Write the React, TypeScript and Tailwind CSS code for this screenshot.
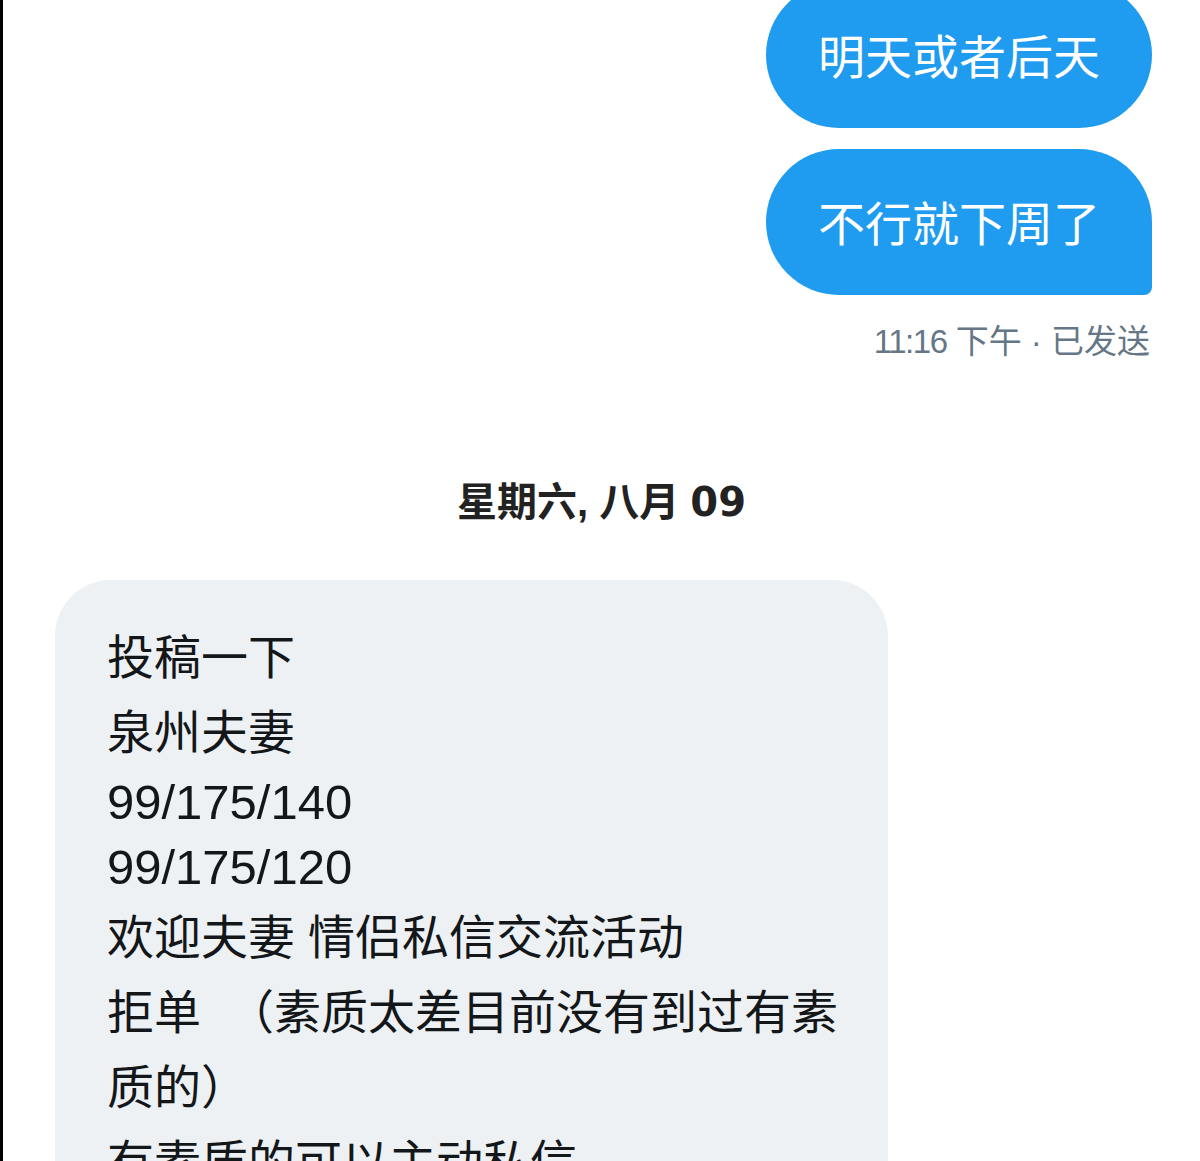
// App.tsx
const font = "font-['Liberation_Sans','Noto_Sans_CJK_SC',sans-serif]";

const lines: { text: string; num?: boolean }[] = [
  { text: "投稿一下" },
  { text: "泉州夫妻" },
  { text: "99/175/140", num: true },
  { text: "99/175/120", num: true },
  { text: "欢迎夫妻 情侣私信交流活动" },
  { text: "拒单\u00a0\u00a0（素质太差目前没有到过有素" },
  { text: "质的）" },
  { text: "有素质的可以主动私信" },
];

export default function App() {
  return (
    <div className={`flex h-[1161px] w-[1200px] overflow-hidden bg-white ${font}`}>
      <div className="w-[3px] shrink-0 bg-black" />
      <div className="flex flex-1 flex-col">
        {/* sent messages */}
        <div className="flex flex-col items-end pr-[48px]">
          <div className="mt-[-18px] flex h-[146px] items-center rounded-full bg-[#1f9bf0] px-[52px] pt-[6px] text-[47px] text-white whitespace-nowrap">
            明天或者后天
          </div>
          <div className="mt-[21px] flex h-[146px] items-center rounded-l-[73px] rounded-tr-[73px] rounded-br-[8px] bg-[#1f9bf0] px-[52px] pt-[6px] text-[47px] text-white whitespace-nowrap">
            不行就下周了
          </div>
          <p className="mt-[27px] pr-[2px] text-[33px] leading-[40px] text-[#657786]">
            <span className="tracking-[-1.5px]">11:16</span> 下午 · 已发送
          </p>
        </div>

        {/* date divider */}
        <p className="mt-[116px] text-center text-[40px] font-bold leading-[48px] text-[#222]">
          星期六, 八月{" "}
          <span className="font-['DejaVu_Sans',sans-serif]">09</span>
        </p>

        {/* received message */}
        <div className="ml-[52px] mt-[54px] w-[833px] rounded-[56px] bg-[#eef1f3] px-[52px] pt-[40px] pb-10 text-[#14171a]">
          {lines.map((l, i) =>
            l.num ? (
              <div key={i} className="h-[65px] whitespace-nowrap text-[49px] leading-[65px]">
                {l.text}
              </div>
            ) : (
              <div key={i} className="h-[75px] whitespace-nowrap text-[47px] leading-[75px]">
                {l.text}
              </div>
            )
          )}
        </div>
      </div>
    </div>
  );
}
